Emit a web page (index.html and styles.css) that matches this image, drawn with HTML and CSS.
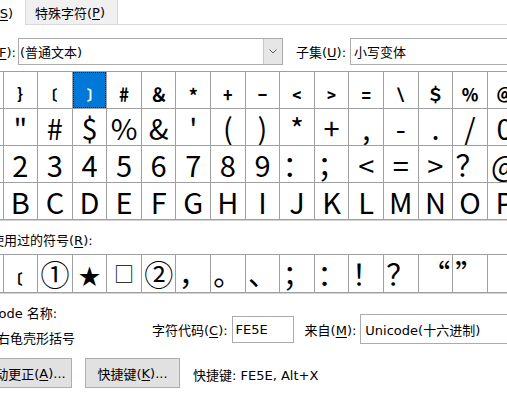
FILE: index.html
```html
<!DOCTYPE html>
<html lang="zh-CN">
<head>
<meta charset="utf-8">
<title>符号</title>
<link rel="stylesheet" href="styles.css">
</head>
<body>
<div class="dlg">
  <div class="tabs">
    <div class="tab tab-on"><span>符号(<u>S</u>)</span></div>
    <div class="tab tab-off">特殊字符(<u>P</u>)</div>
    <div class="tab-rest"></div>
  </div>

  <div class="row-font">
    <div class="lbl lbl-font"><span>字体(<u>F</u>):</span></div>
    <div class="combo combo-font">
      <span class="combo-text">(普通文本)</span>
      <span class="drop"><svg width="8" height="5" viewBox="0 0 8 5"><polyline points="0.5,0.5 4,4 7.5,0.5" fill="none" stroke="#606060" stroke-width="1"/></svg></span>
    </div>
    <div class="lbl lbl-sub">子集(<u>U</u>):</div>
    <div class="combo combo-sub"><span class="combo-text">小写变体</span></div>
  </div>

  <div class="grid grid-main">
    <div class="cell small">﹛</div><div class="cell small">﹜</div><div class="cell small">﹝</div><div class="cell small sel">﹞</div>
    <div class="cell small">﹟</div><div class="cell small">﹠</div><div class="cell small">﹡</div><div class="cell small">﹢</div>
    <div class="cell small">﹣</div><div class="cell small">﹤</div><div class="cell small">﹥</div><div class="cell small">﹦</div>
    <div class="cell small">﹨</div><div class="cell small">﹩</div><div class="cell small">﹪</div><div class="cell small">﹫</div>

    <div class="cell">！</div><div class="cell">＂</div><div class="cell">＃</div><div class="cell">＄</div>
    <div class="cell">％</div><div class="cell">＆</div><div class="cell">＇</div><div class="cell">（</div>
    <div class="cell">）</div><div class="cell">＊</div><div class="cell">＋</div><div class="cell">，</div>
    <div class="cell">－</div><div class="cell">．</div><div class="cell">／</div><div class="cell">０</div>

    <div class="cell">１</div><div class="cell">２</div><div class="cell">３</div><div class="cell">４</div>
    <div class="cell">５</div><div class="cell">６</div><div class="cell">７</div><div class="cell">８</div>
    <div class="cell">９</div><div class="cell">：</div><div class="cell">；</div><div class="cell">＜</div>
    <div class="cell">＝</div><div class="cell">＞</div><div class="cell">？</div><div class="cell">＠</div>

    <div class="cell">Ａ</div><div class="cell">Ｂ</div><div class="cell">Ｃ</div><div class="cell">Ｄ</div>
    <div class="cell">Ｅ</div><div class="cell">Ｆ</div><div class="cell">Ｇ</div><div class="cell">Ｈ</div>
    <div class="cell">Ｉ</div><div class="cell">Ｊ</div><div class="cell">Ｋ</div><div class="cell">Ｌ</div>
    <div class="cell">Ｍ</div><div class="cell">Ｎ</div><div class="cell">Ｏ</div><div class="cell">Ｐ</div>
  </div>

  <div class="recent-lbl">近期使用过的符号(<u>R</u>):</div>

  <div class="grid grid-recent">
    <div class="cell small">﹞</div><div class="cell small">﹝</div><div class="cell">①</div><div class="cell star">★</div>
    <div class="cell sq">□</div><div class="cell">②</div><div class="cell">，</div><div class="cell">。</div>
    <div class="cell">、</div><div class="cell">；</div><div class="cell">：</div><div class="cell">！</div>
    <div class="cell">？</div><div class="cell q-right">“</div><div class="cell q-left">”</div><div class="cell"></div>
  </div>

  <div class="info">
    <div class="names">
      <div class="name-lbl">Unicode 名称:</div>
      <div class="name-val">右龟壳形括号</div>
    </div>
    <div class="code">
      <div class="lbl">字符代码(<u>C</u>):</div>
      <div class="field">FE5E</div>
      <div class="lbl lbl-from">来自(<u>M</u>):</div>
      <div class="combo combo-from"><span class="combo-text">Unicode(十六进制)</span></div>
    </div>
  </div>

  <div class="btns">
    <div class="btn btn-auto">自动更正(<u>A</u>)...</div>
    <div class="btn btn-key">快捷键(<u>K</u>)...</div>
    <div class="shortcut">快捷键: FE5E, Alt+X</div>
  </div>
</div>
</body>
</html>
```

FILE: styles.css
```css
html, body {
  margin: 0;
  padding: 0;
  background: #ffffff;
}

body {
  width: 507px;
  height: 400px;
  overflow: hidden;
  font-family: "DejaVu Sans", "Noto Sans CJK SC", sans-serif;
  font-size: 13px;
  color: #000000;
}

u {
  text-decoration: underline;
  text-underline-offset: 2px;
}

.dlg {
  width: 507px;
}

/* tabs */
.tabs {
  display: flex;
  height: 25px;
}

.tab {
  box-sizing: border-box;
  height: 25px;
  display: flex;
  align-items: center;
  white-space: nowrap;
  flex-shrink: 0;
}

.tab-on {
  width: 25px;
  justify-content: flex-end;
  padding-right: 12px;
  overflow: hidden;
  background: #ffffff;
}

.tab-off {
  width: 93px;
  padding-left: 9px;
  background: #f0f0f0;
  border-left: 1px solid #d9d9d9;
  border-right: 1px solid #d9d9d9;
  border-bottom: 1px solid #d9d9d9;
}

.tab-rest {
  flex: 1;
  height: 25px;
  box-sizing: border-box;
  border-bottom: 1px solid #d9d9d9;
}

/* font row */
.row-font {
  display: flex;
  align-items: center;
  margin-top: 13px;
  height: 27px;
}

.lbl {
  white-space: nowrap;
  flex-shrink: 0;
}

.lbl-font {
  width: 16px;
  padding-right: 2px;
  display: flex;
  justify-content: flex-end;
  overflow: hidden;
}

.combo {
  box-sizing: border-box;
  height: 27px;
  border: 1px solid #ababab;
  background: #ffffff;
  display: flex;
  align-items: center;
  white-space: nowrap;
  overflow: hidden;
  flex-shrink: 0;
}

.combo-text {
  padding-left: 1px;
}

.combo-font {
  width: 265px;
}

.drop {
  margin-left: auto;
  box-sizing: border-box;
  width: 19px;
  height: 25px;
  background: #e6e6e6;
  border-left: 1px solid #c8c8c8;
  display: flex;
  align-items: center;
  justify-content: center;
}

.lbl-sub {
  margin-left: 13px;
  width: 54px;
}

.combo-sub {
  width: 200px;
  padding-left: 2px;
}

/* symbol grids */
.grid {
  display: grid;
  grid-template-columns: repeat(16, 33.6px);
  gap: 1px;
  padding: 1px;
  background: #a0a0a0;
  width: max-content;
  margin-left: -32.1px;
  border-bottom: 1px solid #d4d4d4;
}

.grid-main {
  margin-top: 6px;
  grid-auto-rows: 36px;
}

.grid-recent {
  margin-top: 3px;
  grid-auto-rows: 37px;
}

.cell {
  background: #ffffff;
  display: flex;
  align-items: center;
  justify-content: center;
  font-family: "Noto Sans CJK SC", sans-serif;
  font-size: 29px;
  line-height: 1;
  overflow: hidden;
}

.grid-main .cell {
  font-feature-settings: "pwid" 1;
}

.cell.small {
  font-size: 22px;
  font-weight: 700;
}

.grid-main .cell.small {
  font-feature-settings: normal;
}

.cell.sel {
  background: #0078d7;
  color: #ffffff;
  outline: 1px dotted #202020;
  outline-offset: -1px;
}

.cell.star {
  font-size: 22px;
}

.cell.sq {
  font-size: 20px;
}

.cell.q-right {
  justify-content: flex-end;
  padding-right: 2px;
}

.cell.q-left {
  justify-content: flex-start;
  padding-left: 2px;
}

.recent-lbl {
  margin-top: 10px;
  margin-left: -35px;
  height: 20px;
  line-height: 20px;
  white-space: nowrap;
}

/* info */
.info {
  display: flex;
  align-items: flex-start;
  margin-top: 10px;
  margin-left: -27px;
}

.names {
  width: 179px;
  flex-shrink: 0;
  white-space: nowrap;
}

.name-lbl {
  height: 20px;
  line-height: 20px;
  margin-left: -3px;
}

.name-val {
  margin-top: 5px;
  margin-left: 24px;
  height: 20px;
  line-height: 20px;
}

.code {
  display: flex;
  align-items: center;
  margin-top: 10px;
}

.field {
  box-sizing: border-box;
  margin-left: 4px;
  width: 62px;
  height: 27px;
  border: 1px solid #ababab;
  padding-left: 3px;
  display: flex;
  align-items: center;
  flex-shrink: 0;
}

.lbl-from {
  margin-left: 11px;
}

.combo-from {
  margin-left: 4px;
  width: 200px;
  height: 30px;
  padding-left: 3px;
}

/* buttons */
.btns {
  display: flex;
  align-items: center;
  margin-top: 9px;
  margin-left: -24px;
  gap: 13px;
  height: 30px;
}

.btn {
  box-sizing: border-box;
  height: 30px;
  background: #e1e1e1;
  border: 1px solid #adadad;
  display: flex;
  align-items: center;
  justify-content: center;
  white-space: nowrap;
  flex-shrink: 0;
}

.btn-auto {
  width: 96px;
}

.btn-key {
  width: 95px;
}

.shortcut {
  white-space: nowrap;
  padding-top: 3px;
}
```
